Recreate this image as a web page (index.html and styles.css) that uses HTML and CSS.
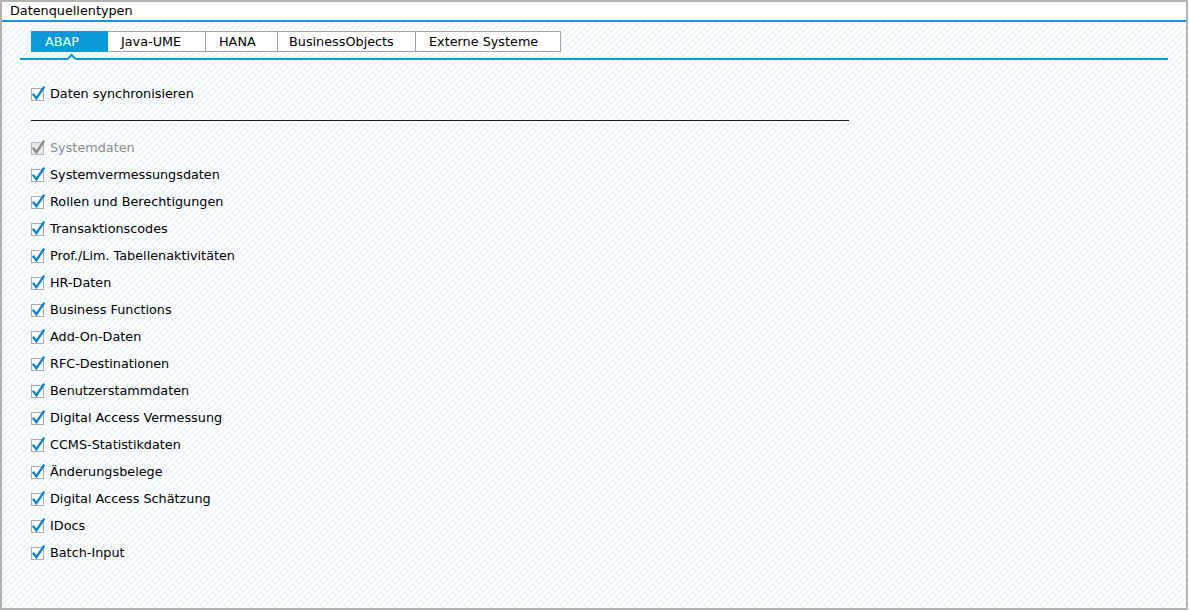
FILE: index.html
```html
<!DOCTYPE html>
<html lang="de">
<head>
<meta charset="utf-8">
<title>Datenquellentypen</title>
<link rel="stylesheet" href="styles.css">
</head>
<body>
<div class="frame">
  <div class="header">Datenquellentypen</div>
  <div class="content">
    <div class="tabbar">
      <div class="tab tab-abap active">ABAP</div>
      <div class="tab tab-java">Java-UME</div>
      <div class="tab tab-hana">HANA</div>
      <div class="tab tab-bo">BusinessObjects</div>
      <div class="tab tab-ext">Externe Systeme</div>
      <span class="notch"></span>
    </div>

    <label class="row sync"><svg class="cb" viewBox="0 0 16 16"><rect x="0.5" y="2.5" width="12" height="12" class="box"/><path d="M2.6 8.6 L5.4 12.2 L12.6 1.6" class="chk"/></svg><span>Daten synchronisieren</span></label>

    <div class="sep"></div>

    <div class="list">
      <label class="row disabled"><svg class="cb" viewBox="0 0 16 16"><rect x="0.5" y="2.5" width="12" height="12" class="box"/><path d="M2.6 8.6 L5.4 12.2 L12.6 1.6" class="chk"/></svg><span>Systemdaten</span></label>
      <label class="row"><svg class="cb" viewBox="0 0 16 16"><rect x="0.5" y="2.5" width="12" height="12" class="box"/><path d="M2.6 8.6 L5.4 12.2 L12.6 1.6" class="chk"/></svg><span>Systemvermessungsdaten</span></label>
      <label class="row"><svg class="cb" viewBox="0 0 16 16"><rect x="0.5" y="2.5" width="12" height="12" class="box"/><path d="M2.6 8.6 L5.4 12.2 L12.6 1.6" class="chk"/></svg><span>Rollen und Berechtigungen</span></label>
      <label class="row"><svg class="cb" viewBox="0 0 16 16"><rect x="0.5" y="2.5" width="12" height="12" class="box"/><path d="M2.6 8.6 L5.4 12.2 L12.6 1.6" class="chk"/></svg><span>Transaktionscodes</span></label>
      <label class="row"><svg class="cb" viewBox="0 0 16 16"><rect x="0.5" y="2.5" width="12" height="12" class="box"/><path d="M2.6 8.6 L5.4 12.2 L12.6 1.6" class="chk"/></svg><span>Prof./Lim. Tabellenaktivitäten</span></label>
      <label class="row"><svg class="cb" viewBox="0 0 16 16"><rect x="0.5" y="2.5" width="12" height="12" class="box"/><path d="M2.6 8.6 L5.4 12.2 L12.6 1.6" class="chk"/></svg><span>HR-Daten</span></label>
      <label class="row"><svg class="cb" viewBox="0 0 16 16"><rect x="0.5" y="2.5" width="12" height="12" class="box"/><path d="M2.6 8.6 L5.4 12.2 L12.6 1.6" class="chk"/></svg><span>Business Functions</span></label>
      <label class="row"><svg class="cb" viewBox="0 0 16 16"><rect x="0.5" y="2.5" width="12" height="12" class="box"/><path d="M2.6 8.6 L5.4 12.2 L12.6 1.6" class="chk"/></svg><span>Add-On-Daten</span></label>
      <label class="row"><svg class="cb" viewBox="0 0 16 16"><rect x="0.5" y="2.5" width="12" height="12" class="box"/><path d="M2.6 8.6 L5.4 12.2 L12.6 1.6" class="chk"/></svg><span>RFC-Destinationen</span></label>
      <label class="row"><svg class="cb" viewBox="0 0 16 16"><rect x="0.5" y="2.5" width="12" height="12" class="box"/><path d="M2.6 8.6 L5.4 12.2 L12.6 1.6" class="chk"/></svg><span>Benutzerstammdaten</span></label>
      <label class="row"><svg class="cb" viewBox="0 0 16 16"><rect x="0.5" y="2.5" width="12" height="12" class="box"/><path d="M2.6 8.6 L5.4 12.2 L12.6 1.6" class="chk"/></svg><span>Digital Access Vermessung</span></label>
      <label class="row"><svg class="cb" viewBox="0 0 16 16"><rect x="0.5" y="2.5" width="12" height="12" class="box"/><path d="M2.6 8.6 L5.4 12.2 L12.6 1.6" class="chk"/></svg><span>CCMS-Statistikdaten</span></label>
      <label class="row"><svg class="cb" viewBox="0 0 16 16"><rect x="0.5" y="2.5" width="12" height="12" class="box"/><path d="M2.6 8.6 L5.4 12.2 L12.6 1.6" class="chk"/></svg><span>Änderungsbelege</span></label>
      <label class="row"><svg class="cb" viewBox="0 0 16 16"><rect x="0.5" y="2.5" width="12" height="12" class="box"/><path d="M2.6 8.6 L5.4 12.2 L12.6 1.6" class="chk"/></svg><span>Digital Access Schätzung</span></label>
      <label class="row"><svg class="cb" viewBox="0 0 16 16"><rect x="0.5" y="2.5" width="12" height="12" class="box"/><path d="M2.6 8.6 L5.4 12.2 L12.6 1.6" class="chk"/></svg><span>IDocs</span></label>
      <label class="row"><svg class="cb" viewBox="0 0 16 16"><rect x="0.5" y="2.5" width="12" height="12" class="box"/><path d="M2.6 8.6 L5.4 12.2 L12.6 1.6" class="chk"/></svg><span>Batch-Input</span></label>
    </div>
  </div>
</div>
</body>
</html>
```

FILE: styles.css
```css
* { box-sizing: border-box; }

html, body {
  margin: 0;
  padding: 0;
  background: #ffffff;
}

body {
  font-family: "DejaVu Sans", Verdana, sans-serif;
  font-size: 12.8px;
  color: #000;
}

.frame {
  width: 1188px;
  height: 610px;
  border: 2px solid #b3b3b3;
  display: flex;
  flex-direction: column;
  background: #fff;
}

.header {
  height: 20px;
  line-height: 18px;
  padding-left: 8px;
  border-bottom: 2px solid #0a9ad8;
  background: #fff;
}

.content {
  flex: 1;
  padding: 9px 0 0 0;
  background-color: #fff;
  background-image: linear-gradient(135deg,
    #eef6fc 25%, transparent 25%, transparent 50%,
    #eef6fc 50%, #eef6fc 75%, transparent 75%);
  background-size: 6px 6px;
}

.tabbar {
  position: relative;
  display: flex;
  margin-left: 18px;
  width: 1148px;
  padding-left: 11px;
  padding-bottom: 6px;
  border-bottom: 2px solid #0a9ad8;
}

.tab {
  height: 21px;
  line-height: 20px;
  border: 1px solid #a3a3a3;
  border-left: none;
  background: #fff;
  padding-left: 13px;
  white-space: nowrap;
}

.tab.tab-abap { border-left: 1px solid #0a9ad8; }
.tab.active {
  background: #0a9ad8;
  border-color: #0a9ad8;
  color: #fff;
}

.tab-abap { width: 77px; }
.tab-java { width: 98px; }
.tab-hana { width: 72px; }
.tab-bo { width: 138px; padding-left: 11px; }
.tab-ext { width: 145px; }

.notch {
  position: absolute;
  left: 48px;
  bottom: -4px;
  width: 7px;
  height: 7px;
  border-top: 2px solid #0a9ad8;
  border-left: 2px solid #0a9ad8;
  background: #fff;
  transform: rotate(45deg);
}

.row {
  display: flex;
  align-items: center;
  height: 27px;
  padding-left: 29px;
  white-space: nowrap;
}

.sync { margin-top: 20px; }

.cb {
  width: 16px;
  height: 16px;
  margin-right: 3px;
  flex: none;
}

.cb .box {
  fill: #ffffff;
  stroke: #ababab;
  stroke-width: 1;
}

.cb .chk {
  fill: none;
  stroke: #0a82d2;
  stroke-width: 2.3;
  stroke-linecap: square;
  stroke-linejoin: miter;
}

.row.disabled { color: #8c8c8c; }
.row.disabled .box { fill: #e6e6e6; stroke: #b8b8b8; }
.row.disabled .chk { stroke: #8a8a8a; }

.sep {
  margin: 13px 0 0 29px;
  width: 818px;
  height: 1px;
  background: #1a1a1a;
}

.list { margin-top: 13px; }
```
